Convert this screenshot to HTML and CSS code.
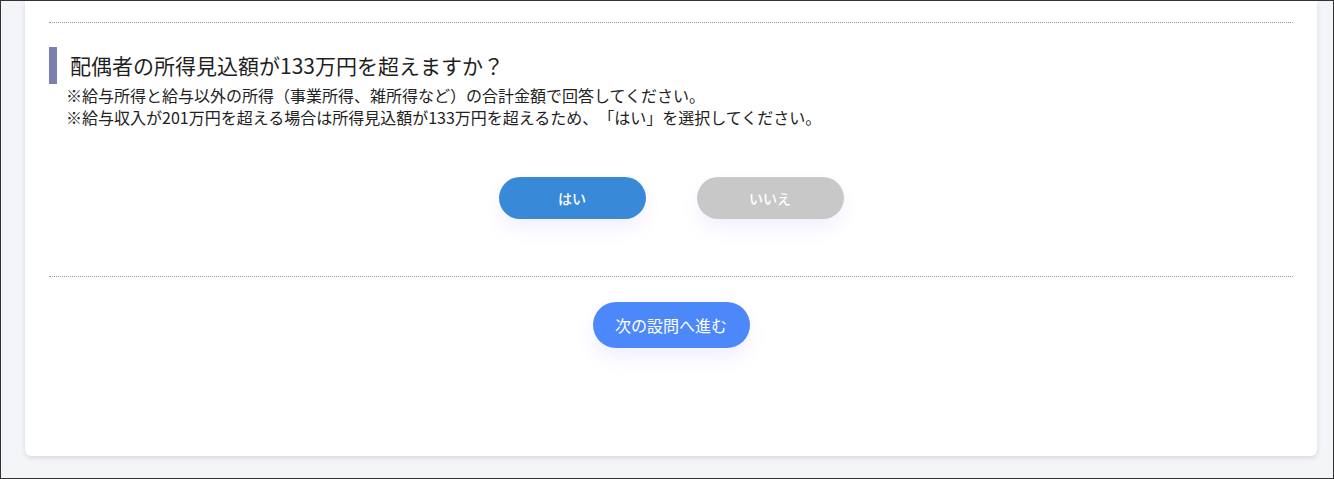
FILE: index.html
```html
<html>
<head>
    <meta charset="utf-8">
    <link rel="stylesheet" href="styles.css">
    <title>配偶者の所得見込額</title>
</head>
<body>
<div class="frame">
    <div class="card">
        <hr class="dots">
        <div class="question">
            <h2>配偶者の所得見込額が133万円を超えますか？</h2>
            <p class="note">※給与所得と給与以外の所得（事業所得、雑所得など）の合計金額で回答してください。<br>
                ※給与収入が201万円を超える場合は所得見込額が133万円を超えるため、「はい」を選択してください。</p>
        </div>
        <div class="answers">
            <button class="answer yes">はい</button>
            <button class="answer no">いいえ</button>
        </div>
        <hr class="dots lower">
        <div class="next-row">
            <button class="next">次の設問へ進む</button>
        </div>
    </div>
</div>
</body>
</html>
```

FILE: styles.css
```css
body {
    margin: 0;
    font-family: "Noto Sans CJK JP", "Noto Sans", sans-serif;
    color: #222;
    text-spacing-trim: space-all;
}

.frame {
    height: 479px;
    box-sizing: border-box;
    border: 1px solid #333;
    background: #f4f5f9;
    padding: 0 16px 0 24px;
    overflow: hidden;
}

.card {
    background: #fff;
    border-radius: 0 0 6px 6px;
    box-shadow: 0 2px 5px rgba(0, 0, 0, 0.12);
    padding: 21px 24px 108px 24px;
}

hr.dots {
    border: 0;
    border-top: 1px dotted #999;
    margin: 0;
}

hr.lower {
    margin-top: 57px;
}

.question {
    margin-top: 24px;
}

h2 {
    margin: 0;
    font-size: 21px;
    font-weight: 400;
    line-height: 37px;
    border-left: 8px solid #7b80b1;
    padding-left: 13px;
    color: #1f1f1f;
}

.note {
    margin: 0;
    padding-left: 17px;
    font-size: 16px;
    line-height: 22px;
}

.answers {
    display: flex;
    justify-content: center;
    gap: 51px;
    margin-top: 49px;
}

button {
    font-family: inherit;
    border: 0;
    border-radius: 999px;
    color: #fff;
    cursor: pointer;
}

.answer {
    width: 147px;
    height: 42px;
    font-size: 14px;
    font-weight: 500;
    box-shadow: 0 10px 18px rgba(120, 100, 255, 0.09);
}

.yes {
    background: #3889d8;
}

.no {
    background: #c8c8c8;
}

.next-row {
    display: flex;
    justify-content: center;
    margin-top: 25px;
}

.next {
    width: 157px;
    height: 46px;
    font-size: 16px;
    background: #4d88fa;
    box-shadow: 0 10px 18px rgba(120, 100, 255, 0.1);
}
```
